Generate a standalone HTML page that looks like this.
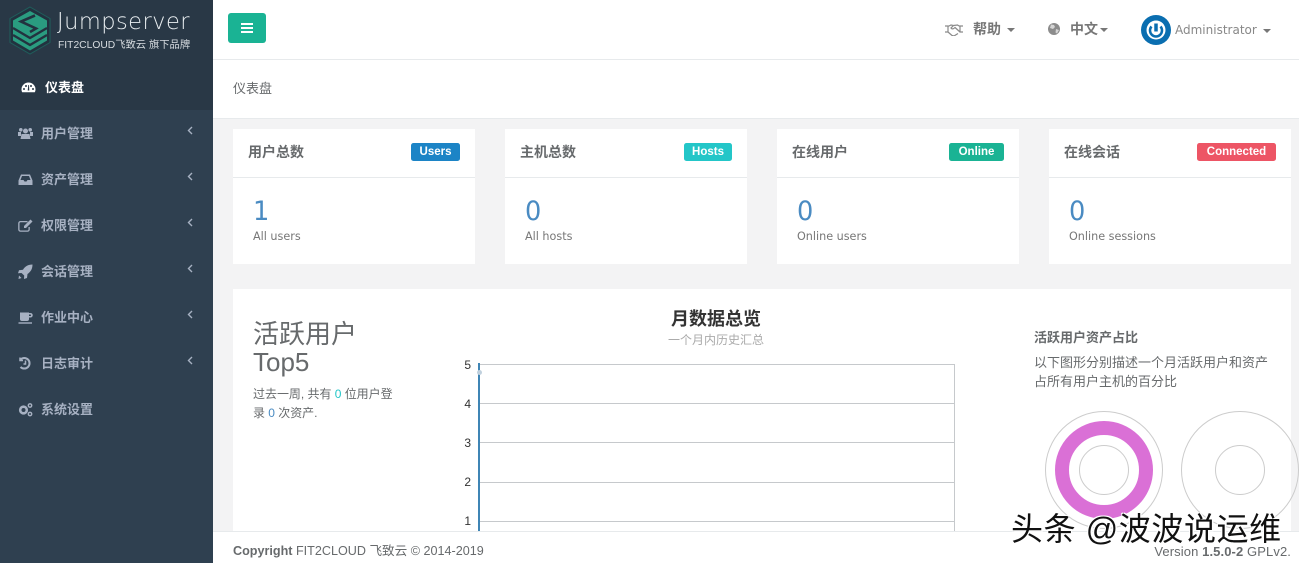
<!DOCTYPE html>
<html lang="zh"><head><meta charset="utf-8"><title>Jumpserver</title>
<style>
*{box-sizing:border-box;margin:0;padding:0}
html,body{width:1299px;height:563px;overflow:hidden;background:#f3f3f4}
body{position:relative;font-family:"Liberation Sans","Noto Sans CJK SC",sans-serif;color:#676a6c;font-size:13px}
.a{position:absolute;white-space:nowrap}
#side{left:0;top:0;width:213px;height:563px;background:#2f4050}
#logoarea{left:0;top:0;width:213px;height:110px;background:#293846}
.nav{position:absolute;left:41px;font-size:13px;font-weight:700;color:#a7b1c2;line-height:18px;white-space:nowrap}
.ic{position:absolute;left:18px;width:15px;height:15px;fill:#a7b1c2}
.ch{position:absolute;left:187px;width:6px;height:9px;fill:none;stroke:#a7b1c2;stroke-width:1.4}
.card{position:absolute;top:129px;height:135px;background:#fff}
.card hr{position:absolute;left:0;right:0;top:48px;border:0;height:1px;background:#e7eaec}
.card h5{position:absolute;left:15px;top:14px;font-size:14px;line-height:18px;font-weight:700;color:#676a6c;white-space:nowrap}
.lb{position:absolute;top:14px;height:18px;line-height:18px;border-radius:2.5px;color:#fff;font-size:11.5px;font-weight:700;text-align:center;white-space:nowrap}
.num{position:absolute;top:65px;font-family:"DejaVu Sans",sans-serif;font-size:27px;line-height:36px;color:#4a8bc2;font-weight:400;transform:scaleX(.95);transform-origin:left}
.sub{position:absolute;left:20px;top:100px;font-family:"DejaVu Sans",sans-serif;font-size:11.2px;line-height:16px;color:#777;white-space:nowrap}
.ax{position:absolute;font-size:12px;line-height:14px;color:#333;text-align:right;width:14px;left:457px}
.gl{position:absolute;left:480px;width:475px;height:1px;background:#c6c9cc}
</style></head>
<body>
<div class="a" id="side"></div>
<div class="a" id="logoarea"></div>

<svg class="a" style="left:9px;top:6px" width="42" height="49" viewBox="0 0 42 49">
<path d="M21 1L41 12.500V36.500L21 48L1 36.500V12.500Z" fill="#22323f" stroke="#1f5f5c" stroke-width="1"/>
<path d="M21 5L38 14.500V34.500L21 44.500L4 34.500V14.500Z" fill="#2a9c80"/>
<path d="M4 22L21 32L38 22M4 29L21 39L38 29" fill="none" stroke="#22323f" stroke-width="2.400"/>
<path d="M26 9.500L12 15.500L27 22.500L21 26" fill="none" stroke="#22323f" stroke-width="2.600"/>
</svg>
<div class="a" style="left:57px;top:8px;font-family:'DejaVu Sans',sans-serif;font-size:23px;line-height:28px;font-weight:200;color:#e8edf0;letter-spacing:.45px;transform:scaleX(.98);transform-origin:left">Jumpserver</div>
<div class="a" style="left:58px;top:39px;font-size:10.300px;line-height:14px;color:#d8dde1">FIT2CLOUD飞致云 旗下品牌</div>

<svg class="ic" style="top:80px;left:21px;fill:#fff" viewBox="0 0 15 15"><path d="M7.500 2.500A7 7 0 0 0 .5 9.500c0 1 .3 2 .7 2.800h12.600c.4-.8.700-1.800.700-2.800a7 7 0 0 0-7-7zM3 10a1 1 0 1 1 0-2 1 1 0 0 1 0 2zm2-3a1 1 0 1 1 0-2 1 1 0 0 1 0 2zm3.300 3.500H6.700L7.300 5h.7zM10 7a1 1 0 1 1 0-2 1 1 0 0 1 0 2zm2 3a1 1 0 1 1 0-2 1 1 0 0 1 0 2z"/></svg>
<div class="nav" style="left:45px;top:79px;color:#fff">仪表盘</div>

<svg class="ic" style="top:126px" viewBox="0 0 15 15"><circle cx="7.500" cy="5" r="2.500"/><circle cx="2.800" cy="3.800" r="1.800"/><circle cx="12.200" cy="3.800" r="1.800"/><path d="M3.500 8h8l1 5h-10z"/><path d="M0 6h3v4H0zM12 6h3v4h-3z"/></svg>
<div class="nav" style="top:125px">用户管理</div>
<svg class="ch" style="top:126px" viewBox="0 0 6 9"><path d="M5 1L1.500 4.500L5 8"/></svg>

<svg class="ic" style="top:172px" viewBox="0 0 15 15"><path d="M3 2.500h9l2.500 6v4.500H.5V8.500zM4 4L2.500 8h3l1 1.500h2l1-1.500h3L11 4z" fill-rule="evenodd"/></svg>
<div class="nav" style="top:171px">资产管理</div>
<svg class="ch" style="top:172px" viewBox="0 0 6 9"><path d="M5 1L1.500 4.500L5 8"/></svg>

<svg class="ic" style="top:218px" viewBox="0 0 15 15"><path d="M2.500 3h7v1.300h-7a1 1 0 0 0-1 1v6.200a1 1 0 0 0 1 1h7a1 1 0 0 0 1-1V9h1.300v2.500a2.300 2.300 0 0 1-2.300 2.300h-7A2.300 2.300 0 0 1 .2 11.500V5.300A2.300 2.300 0 0 1 2.500 3z"/><path d="M12.500 1.500l2 2L8 10H6V8z"/></svg>
<div class="nav" style="top:217px">权限管理</div>
<svg class="ch" style="top:218px" viewBox="0 0 6 9"><path d="M5 1L1.500 4.500L5 8"/></svg>

<svg class="ic" style="top:264px" viewBox="0 0 15 15"><path d="M14.500.5c0 4.500-2 7.500-5 9.500l-.5 4-3 1 .2-3.500L3.500 9 0 9.200l1-3 4-.5C7 2.500 10 .5 14.500.5z"/><path d="M1 11.500l2.500 2.500-3 1z"/></svg>
<div class="nav" style="top:263px">会话管理</div>
<svg class="ch" style="top:264px" viewBox="0 0 6 9"><path d="M5 1L1.500 4.500L5 8"/></svg>

<svg class="ic" style="top:310px" viewBox="0 0 15 15"><path d="M2 2.500h9v6.500a2 2 0 0 1-2 2H4a2 2 0 0 1-2-2z"/><path d="M11 3h1.500a1.800 1.800 0 0 1 0 4.500H11V6h1.300a.5.500 0 0 0 0-1.500H11z"/><path d="M.5 12.300h13.500v1.400H.5z"/></svg>
<div class="nav" style="top:309px">作业中心</div>
<svg class="ch" style="top:310px" viewBox="0 0 6 9"><path d="M5 1L1.500 4.500L5 8"/></svg>

<svg class="ic" style="top:356px;fill:none;stroke:#a7b1c2;stroke-width:2" viewBox="0 0 15 15"><path d="M2.500 3.500A5.300 5.300 0 1 1 2.500 11"/><path d="M2 1.500v3h3" stroke-width="1.500"/><path d="M7.500 4.500v3.500h-2" stroke-width="1.500"/></svg>
<div class="nav" style="top:355px">日志审计</div>
<svg class="ch" style="top:356px" viewBox="0 0 6 9"><path d="M5 1L1.500 4.500L5 8"/></svg>

<svg class="ic" style="top:402px" viewBox="0 0 15 15"><circle cx="5.500" cy="8" r="3.300" fill="none" stroke="#a7b1c2" stroke-width="2.600"/><circle cx="12" cy="3.500" r="1.700" fill="none" stroke="#a7b1c2" stroke-width="1.400"/><circle cx="12" cy="12" r="1.700" fill="none" stroke="#a7b1c2" stroke-width="1.400"/></svg>
<div class="nav" style="top:401px">系统设置</div>

<!-- top bar -->
<div class="a" style="left:213px;top:0;width:1086px;height:60px;background:#fff;border-bottom:1px solid #e7eaec"></div>
<div class="a" style="left:228px;top:13px;width:38px;height:30px;background:#1ab394;border-radius:3px"></div>
<svg class="a" style="left:241px;top:22px" width="12" height="12" viewBox="0 0 12 12"><path d="M0 1h12v2H0zM0 5h12v2H0zM0 9h12v2H0z" fill="#fff"/></svg>

<svg class="a" style="left:945px;top:23px" width="18" height="13" viewBox="0 0 18 13" fill="none" stroke="#8a8a8a" stroke-width="1.200"><path d="M0 3l3 0v6l-3 0M18 3h-3v6h3M3 3.500l3-1.500 2.500.5L6 5c1 1.500 2.500 1 4-.5l5 4.500M15 3.500L12.500 2 8.500 2.500M3 9l4 3.500 2 .5 4-2.500"/></svg>
<div class="a" style="left:973px;top:20px;font-size:14px;line-height:18px;font-weight:700;color:#777">帮助</div>
<div class="a" style="left:1007px;top:28px;border:4px solid transparent;border-top-color:#777;border-bottom:0"></div>
<svg class="a" style="left:1048px;top:23px" width="12" height="12" viewBox="0 0 12 12"><circle cx="6" cy="6" r="6" fill="#8c8c8c"/><path d="M3 1.500l3 .5 1 2-2 2-3-1zM8 6l3 1-2 3.500-1.500-1z" fill="#d5d5d5"/></svg>
<div class="a" style="left:1070px;top:20px;font-size:14px;line-height:18px;font-weight:700;color:#777">中文</div>
<div class="a" style="left:1100px;top:28px;border:4px solid transparent;border-top-color:#777;border-bottom:0"></div>
<svg class="a" style="left:1141px;top:15px" width="30" height="30" viewBox="0 0 30 30"><circle cx="15" cy="15" r="15" fill="#0a6eb0"/><circle cx="15" cy="15" r="9.500" fill="#fff"/><path d="M15 8.500v8" stroke="#0a6eb0" stroke-width="3.500"/><path d="M10.500 11.500a6 6 0 1 0 9 0" fill="none" stroke="#0a6eb0" stroke-width="2.500"/></svg>
<div class="a" style="left:1175px;top:21px;font-family:'DejaVu Sans',sans-serif;font-size:12px;line-height:18px;color:#888">Administrator</div>
<div class="a" style="left:1263px;top:29px;border:4px solid transparent;border-top-color:#777;border-bottom:0"></div>

<!-- breadcrumb -->
<div class="a" style="left:213px;top:60px;width:1086px;height:59px;background:#fff;border-bottom:1px solid #e7eaec"></div>
<div class="a" style="left:233px;top:80px;font-size:13px;line-height:18px;color:#676a6c">仪表盘</div>

<!-- cards -->
<div class="card" style="left:233px;width:242px"><h5>用户总数</h5><span class="lb" style="left:178px;width:49px;background:#1c84c6">Users</span><hr><div class="num" style="left:20px">1</div><div class="sub">All users</div></div>
<div class="card" style="left:505px;width:242px"><h5>主机总数</h5><span class="lb" style="left:179px;width:48px;background:#23c6c8">Hosts</span><hr><div class="num" style="left:20px">0</div><div class="sub">All hosts</div></div>
<div class="card" style="left:777px;width:242px"><h5>在线用户</h5><span class="lb" style="left:172px;width:55px;background:#1ab394">Online</span><hr><div class="num" style="left:20px">0</div><div class="sub">Online users</div></div>
<div class="card" style="left:1049px;width:242px"><h5>在线会话</h5><span class="lb" style="left:148px;width:79px;background:#ed5565">Connected</span><hr><div class="num" style="left:20px">0</div><div class="sub">Online sessions</div></div>

<!-- main panel -->
<div class="a" style="left:233px;top:289px;width:1058px;height:243px;background:#fff"></div>
<div class="a" style="left:253px;top:320px;font-size:26px;line-height:28px;color:#676a6c;font-weight:400">活跃用户</div>
<div class="a" style="left:253px;top:348px;font-size:26px;line-height:28px;color:#676a6c">Top5</div>
<div class="a" style="left:253px;top:385px;font-size:12px;line-height:19px;color:#676a6c;letter-spacing:-.03px">过去一周, 共有 <span style="color:#23c6c8">0</span> 位用户登<br>录 <span style="color:#4a8bc2">0</span> 次资产.</div>

<div class="a" style="left:671px;top:307px;font-size:18px;line-height:24px;font-weight:700;color:#333">月数据总览</div>
<div class="a" style="left:668px;top:332px;font-size:12px;line-height:16px;color:#aaa">一个月内历史汇总</div>
<div class="ax" style="top:358px">5</div><div class="ax" style="top:397px">4</div><div class="ax" style="top:436px">3</div><div class="ax" style="top:475px">2</div><div class="ax" style="top:514px">1</div>
<div class="gl" style="top:364px"></div><div class="gl" style="top:403px"></div><div class="gl" style="top:442px"></div><div class="gl" style="top:482px"></div><div class="gl" style="top:521px"></div>
<div class="a" style="left:954px;top:364px;width:1px;height:168px;background:#c6c9cc"></div>
<div class="a" style="left:478px;top:363px;width:2px;height:169px;background:#3f85b5"></div>
<div class="a" style="left:477px;top:370px;width:5px;height:5px;border-radius:50%;background:#c0d0dd"></div>

<div class="a" style="left:1034px;top:329px;font-size:13px;line-height:18px;font-weight:700;color:#676a6c">活跃用户资产占比</div>
<div class="a" style="left:1034px;top:354px;font-size:13px;line-height:18.5px;color:#676a6c">以下图形分别描述一个月活跃用户和资产<br>占所有用户主机的百分比</div>
<svg class="a" style="left:1040px;top:405px" width="259" height="127" viewBox="0 0 259 127" fill="none">
<circle cx="64" cy="65" r="58.500" stroke="#ccc"/><circle cx="64" cy="65" r="24.500" stroke="#ccc"/>
<circle cx="64" cy="65" r="42" stroke="#da70d6" stroke-width="14"/>
<circle cx="200" cy="65" r="58.500" stroke="#ccc"/><circle cx="200" cy="65" r="24.500" stroke="#ccc"/>
</svg>

<!-- footer -->
<div class="a" style="left:213px;top:531px;width:1086px;height:32px;background:#fff;border-top:1px solid #e7eaec"></div>
<div class="a" style="left:233px;top:543px;font-size:12.600px;line-height:17px;color:#676a6c"><b>Copyright</b> FIT2CLOUD 飞致云 © 2014-2019</div>
<div class="a" style="right:8px;top:543px;font-size:13px;line-height:17px;color:#676a6c;letter-spacing:.1px">Version <b>1.5.0-2</b> GPLv2.</div>

<div class="a" style="left:1011px;top:509px;font-size:32px;line-height:40px;letter-spacing:.6px;color:#111;text-shadow:1.500px 1.500px 0 #fff,-1px -1px 0 #fff,1px -1px 0 #fff,-1px 1px 0 #fff">头条 @波波说运维</div>
</body></html>
